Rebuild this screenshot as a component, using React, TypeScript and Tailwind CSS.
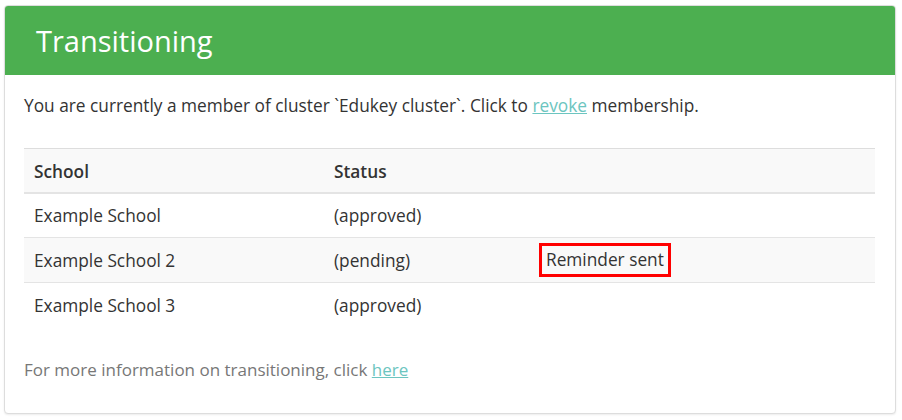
import React from "react";

const rows = [
  { school: "Example School", status: "(approved)", note: null as string | null },
  { school: "Example School 2", status: "(pending)", note: "Reminder sent" },
  { school: "Example School 3", status: "(approved)", note: null as string | null },
];

export default function App() {
  return (
    <div className="w-[902px] h-[420px] bg-white pt-[5px] pl-[4px]" style={{ fontFamily: '"Open Sans", sans-serif' }}>
      <div className="w-[892px] h-[409px] rounded-[4px] border border-[#dddddd] bg-white shadow-[0_1px_2px_rgba(0,0,0,0.08)] overflow-hidden flex flex-col">
        <div className="h-[69px] bg-[#4caf50] flex items-center pl-[31px]">
          <h1 className="text-[29px] text-white leading-none font-normal">Transitioning</h1>
        </div>
        <div className="flex-1 px-[19px] pt-[19px]">
          <p className="text-[17.3px] text-[#333333] leading-[24px]">
            You are currently a member of cluster `Edukey cluster`. Click to{" "}
            <a href="#" className="text-[#6cc5c0] underline">revoke</a> membership.
          </p>
          <table className="mt-[30px] w-[851px] border-collapse text-[17.3px] text-[#333333]">
            <thead>
              <tr className="bg-[#f9f9f9] border-t border-[#dddddd] border-b-2 border-b-[#e4e4e4]">
                <th className="h-[44px] w-[300px] text-left font-semibold pl-[10px] pt-[3px]">School</th>
                <th className="text-left font-semibold pl-[10px] pt-[3px] w-[205px]">Status</th>
                <th></th>
              </tr>
            </thead>
            <tbody>
              {rows.map((r, i) => (
                <tr key={i} className={(i === 1 ? "bg-[#f9f9f9] " : "") + (i < 2 ? "border-b border-[#e4e4e4]" : "")}>
                  <td className="h-[45px] pl-[10px] pt-[2px]">{r.school}</td>
                  <td className="pl-[10px] pt-[2px]">{r.status}</td>
                  <td className="pl-[10px]">
                    {r.note && (
                      <span className="inline-block border-[3px] border-[#ff0000] px-[4px] leading-[28px]">{r.note}</span>
                    )}
                  </td>
                </tr>
              ))}
            </tbody>
          </table>
          <p className="mt-[30px] text-[17px] text-[#777777] leading-[24px]">
            For more information on transitioning, click{" "}
            <a href="#" className="text-[#6cc5c0] underline">here</a>
          </p>
        </div>
      </div>
    </div>
  );
}
